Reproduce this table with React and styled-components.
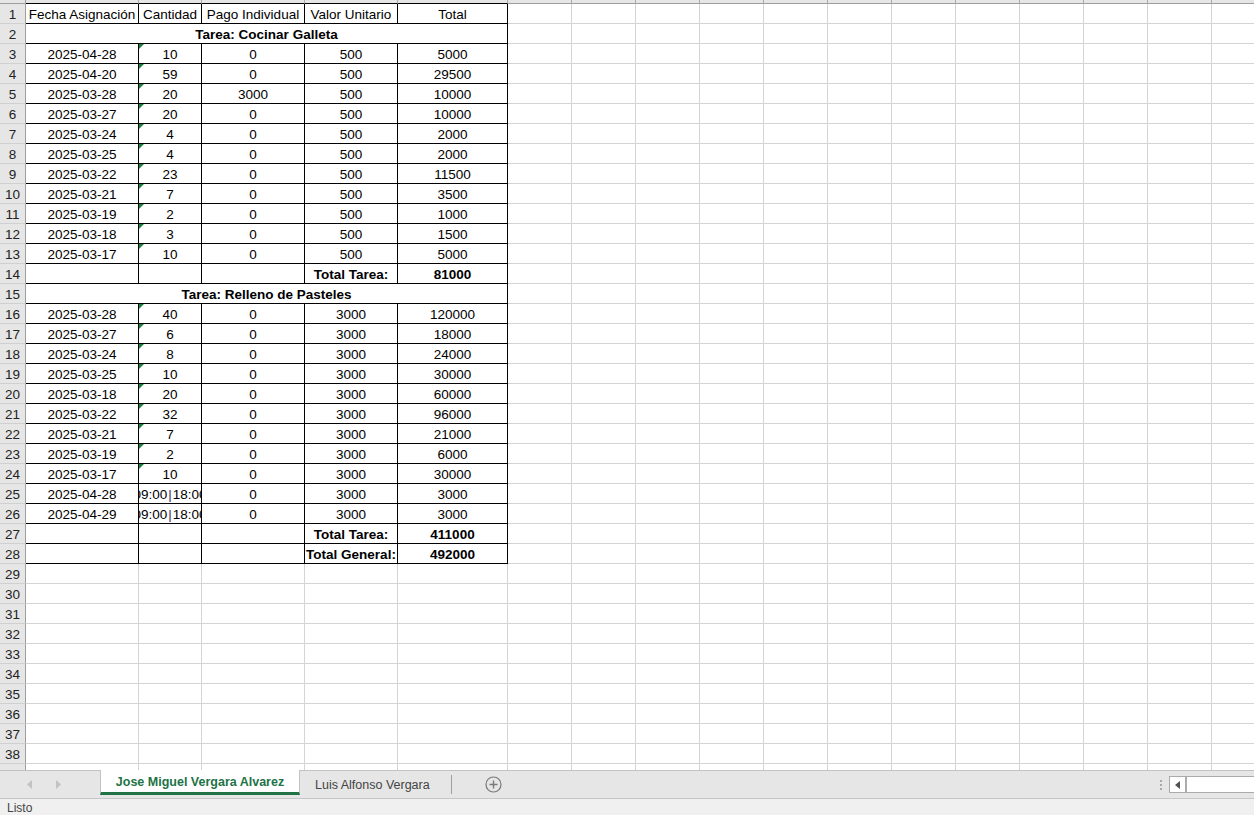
import React from 'react';
import styled, { createGlobalStyle } from 'styled-components';

const GlobalStyle = createGlobalStyle`
    html, body {
        margin: 0;
        padding: 0;
        background: #fff;
        font-family: "Liberation Sans", Arial, sans-serif;
    }
`

// widths include the 1px right gridline of each column
const COLS = [113, 63, 103, 93, 110];
const EMPTY_COLS = [64, 64, 64, 64, 64, 64, 64, 64, 64, 64, 64, 60];
const TABLE_WIDTH = COLS.reduce((a, b) => a + b, 0);

const cocinar = [
    ['2025-04-28', '10', '0', '500', '5000'],
    ['2025-04-20', '59', '0', '500', '29500'],
    ['2025-03-28', '20', '3000', '500', '10000'],
    ['2025-03-27', '20', '0', '500', '10000'],
    ['2025-03-24', '4', '0', '500', '2000'],
    ['2025-03-25', '4', '0', '500', '2000'],
    ['2025-03-22', '23', '0', '500', '11500'],
    ['2025-03-21', '7', '0', '500', '3500'],
    ['2025-03-19', '2', '0', '500', '1000'],
    ['2025-03-18', '3', '0', '500', '1500'],
    ['2025-03-17', '10', '0', '500', '5000'],
];

const relleno = [
    ['2025-03-28', '40', '0', '3000', '120000'],
    ['2025-03-27', '6', '0', '3000', '18000'],
    ['2025-03-24', '8', '0', '3000', '24000'],
    ['2025-03-25', '10', '0', '3000', '30000'],
    ['2025-03-18', '20', '0', '3000', '60000'],
    ['2025-03-22', '32', '0', '3000', '96000'],
    ['2025-03-21', '7', '0', '3000', '21000'],
    ['2025-03-19', '2', '0', '3000', '6000'],
    ['2025-03-17', '10', '0', '3000', '30000'],
    ['2025-04-28', 'TIME', '0', '3000', '3000'],
    ['2025-04-29', 'TIME', '0', '3000', '3000'],
];

function buildRows() {
    const rows = [];
    rows.push({ kind: 'header', cells: ['Fecha Asignación', 'Cantidad', 'Pago Individual', 'Valor Unitario', 'Total'] });
    rows.push({ kind: 'section', text: 'Tarea: Cocinar Galleta' });
    cocinar.forEach(r => rows.push({ kind: 'data', cells: r }));
    rows.push({ kind: 'total', label: 'Total Tarea:', value: '81000' });
    rows.push({ kind: 'section', text: 'Tarea: Relleno de Pasteles' });
    relleno.forEach(r => rows.push({ kind: 'data', cells: r }));
    rows.push({ kind: 'total', label: 'Total Tarea:', value: '411000' });
    rows.push({ kind: 'total', label: 'Total General:', value: '492000' });
    while (rows.length < 39) rows.push({ kind: 'empty' });
    return rows;
}

function EmptyCols() {
    return EMPTY_COLS.map((w, i) => <Cell key={'e' + i} $w={w} />);
}

function SheetRow({ row, index }) {
    let cells;
    if (row.kind === 'section') {
        cells = <Cell $w={TABLE_WIDTH} $edge $bold>{row.text}</Cell>;
    } else if (row.kind === 'total') {
        cells = (
            <>
                <Cell $w={COLS[0]} $edge />
                <Cell $w={COLS[1]} $edge />
                <Cell $w={COLS[2]} $edge />
                <Cell $w={COLS[3]} $edge $bold>{row.label}</Cell>
                <Cell $w={COLS[4]} $edge $bold>{row.value}</Cell>
            </>
        );
    } else if (row.kind === 'header' || row.kind === 'data') {
        cells = row.cells.map((c, i) => {
            if (c === 'TIME') {
                return (
                    <Cell key={i} $w={COLS[i]} $edge>
                        <Clip>09:00<Bar>|</Bar>18:00</Clip>
                    </Cell>
                );
            }
            return (
                <Cell key={i} $w={COLS[i]} $edge>
                    {row.kind === 'data' && i === 1 && <TextFlag />}
                    {c}
                </Cell>
            );
        });
    } else {
        cells = COLS.map((w, i) => <Cell key={i} $w={w} />);
    }
    return (
        <Row>
            <RowHead>{index + 1}</RowHead>
            {cells}
            <EmptyCols />
        </Row>
    );
}

function TabBar() {
    return (
        <Tabs>
            <NavArea>
                <svg width="6" height="9" viewBox="0 0 6 9"><path d="M5 0 L0 4.5 L5 9 Z" fill="#c2c2c2" /></svg>
                <svg width="6" height="9" viewBox="0 0 6 9"><path d="M1 0 L6 4.5 L1 9 Z" fill="#c2c2c2" /></svg>
            </NavArea>
            <ActiveTab>Jose Miguel Vergara Alvarez</ActiveTab>
            <SheetTab>Luis Alfonso Vergara</SheetTab>
            <AddButton>
                <svg width="17" height="17" viewBox="0 0 17 17">
                    <circle cx="8.5" cy="8.5" r="7.5" fill="none" stroke="#7a7a7a" strokeWidth="1.2" />
                    <path d="M8.5 4.5 V12.5 M4.5 8.5 H12.5" stroke="#7a7a7a" strokeWidth="1.4" />
                </svg>
            </AddButton>
            <Spacer />
            <Dots><span /><span /><span /></Dots>
            <HScroll>
                <ScrollArrow>
                    <svg width="5" height="8" viewBox="0 0 5 8"><path d="M5 0 L0 4 L5 8 Z" fill="#505050" /></svg>
                </ScrollArrow>
            </HScroll>
        </Tabs>
    );
}

export default function App() {
    const rows = buildRows();
    return (
        <>
            <GlobalStyle />
            <Window>
                <ColumnStrip>
                    <StripHead />
                    {COLS.map((w, i) => <StripCell key={i} $w={w} $edge />)}
                    {EMPTY_COLS.map((w, i) => <StripCell key={'s' + i} $w={w} />)}
                </ColumnStrip>
                <GridArea>
                    {rows.map((row, i) => <SheetRow key={i} row={row} index={i} />)}
                </GridArea>
                <TabBar />
                <StatusBar>Listo</StatusBar>
            </Window>
        </>
    );
}

const Window = styled.div`
    width: 1254px;
    height: 815px;
    display: flex;
    flex-direction: column;
    overflow: hidden;
    background: #fff;
`

const ColumnStrip = styled.div`
    display: flex;
    height: 4px;
    flex-shrink: 0;
    background: #e6e6e6;
`

const StripHead = styled.div`
    width: 26px;
    box-sizing: border-box;
    border-right: 1px solid #9e9e9e;
    border-bottom: 1px solid #9e9e9e;
    flex-shrink: 0;
`

const StripCell = styled.div`
    width: ${p => p.$w}px;
    flex-shrink: 0;
    box-sizing: border-box;
    border-right: 1px solid #ababab;
    border-bottom: 1px solid ${p => p.$edge ? '#000' : '#9e9e9e'};
`

const GridArea = styled.div`
    flex: 1;
    overflow: hidden;
`

const Row = styled.div`
    display: flex;
    height: 20px;
`

const RowHead = styled.div`
    width: 26px;
    flex-shrink: 0;
    box-sizing: border-box;
    background: #e6e6e6;
    border-right: 1px solid #9e9e9e;
    border-bottom: 1px solid #d0d0d0;
    color: #222;
    font-size: 13.5px;
    line-height: 16px;
    padding-top: 3px;
    text-align: center;
`

const Cell = styled.div`
    position: relative;
    width: ${p => p.$w}px;
    flex-shrink: 0;
    box-sizing: border-box;
    border-right: 1px solid ${p => p.$edge ? '#000' : '#d4d4d4'};
    border-bottom: 1px solid ${p => p.$edge ? '#000' : '#d4d4d4'};
    font-size: 13.5px;
    font-weight: ${p => p.$bold ? 700 : 400};
    line-height: 16px;
    padding-top: 3px;
    color: #000;
    text-align: center;
    white-space: nowrap;
    overflow: hidden;
`

const Clip = styled.div`
    display: flex;
    justify-content: center;
    white-space: nowrap;
`

const Bar = styled.span`
    color: #3d1f5c;
    margin: 0 1px;
`

const TextFlag = styled.span`
    position: absolute;
    left: 0;
    top: 0;
    width: 0;
    height: 0;
    border-top: 5px solid #16803c;
    border-right: 5px solid transparent;
`

const Tabs = styled.div`
    height: 27px;
    flex-shrink: 0;
    display: flex;
    align-items: stretch;
    background: #e6e6e6;
    border-top: 1px solid #c2c2c2;
`

const NavArea = styled.div`
    width: 100px;
    display: flex;
    align-items: center;
    gap: 22px;
    padding-left: 27px;
    box-sizing: border-box;
`

const ActiveTab = styled.div`
    width: 200px;
    box-sizing: border-box;
    margin-top: -1px;
    background: #fff;
    border-left: 1px solid #c2c2c2;
    border-right: 1px solid #c2c2c2;
    border-bottom: 3px solid #217346;
    margin-bottom: 3px;
    color: #217346;
    font-size: 12.5px;
    font-weight: 700;
    display: flex;
    align-items: center;
    justify-content: center;
    padding-top: 2px;
`

const SheetTab = styled.div`
    width: 152px;
    box-sizing: border-box;
    padding-left: 15px;
    margin: 4px 0 4px;
    border-right: 1px solid #a0a0a0;
    color: #444;
    font-size: 12.5px;
    display: flex;
    align-items: center;
`

const AddButton = styled.div`
    width: 82px;
    display: flex;
    align-items: center;
    justify-content: center;
`

const Spacer = styled.div`
    flex: 1;
`

const Dots = styled.div`
    width: 16px;
    display: flex;
    flex-direction: column;
    align-items: center;
    justify-content: center;
    gap: 2px;

    & > span {
        width: 2px;
        height: 2px;
        background: #a8a8a8;
    }
`

const HScroll = styled.div`
    width: 85px;
    margin: 5px 0 5px;
    box-sizing: border-box;
    background: #fff;
    border: 1px solid #ababab;
    border-right: none;
    display: flex;
`

const ScrollArrow = styled.div`
    width: 15px;
    border-right: 2px solid #ababab;
    display: flex;
    align-items: center;
    justify-content: center;
    background: #fff;
`

const StatusBar = styled.div`
    height: 17px;
    flex-shrink: 0;
    box-sizing: border-box;
    background: #f0f0f0;
    border-top: 1px solid #c6c6c6;
    padding-left: 7px;
    padding-top: 3px;
    font-size: 12px;
    line-height: 13px;
    color: #444;
    overflow: hidden;
`
